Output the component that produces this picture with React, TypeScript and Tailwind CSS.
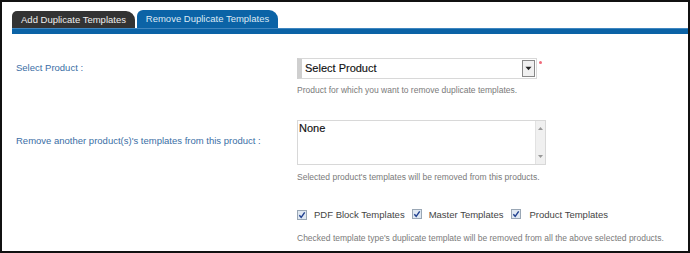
import React from "react";

function Check() {
  return (
    <span className="inline-flex w-[10px] h-[10px] border border-[#9aa7b5] bg-[#dfe8f2] items-center justify-center">
      <svg width="8" height="8" viewBox="0 0 8 8">
        <path d="M1.3 4.2 L3.2 6.3 L6.7 1.3" stroke="#1f3f8f" strokeWidth="1.4" fill="none" />
      </svg>
    </span>
  );
}

export default function App() {
  return (
    <div className="w-[690px] h-[253px] border-2 border-[#111] bg-white overflow-hidden font-['Liberation_Sans',Arial,sans-serif]">
      <div className="pl-[10px] pt-[8px]">
        <div className="flex items-end gap-[2px]">
          <div className="h-[17px] w-[123px] bg-[#333333] rounded-tl-[5px] rounded-tr-[9px] text-[9.5px] text-[#eeeeee] flex items-center justify-center pt-[1px]">
            Add Duplicate Templates
          </div>
          <div className="h-[18px] w-[141px] bg-[#0b63a6] rounded-tl-[6px] rounded-tr-[9px] text-[9.5px] text-[#dce9f5] flex items-center justify-center pt-[1px]">
            Remove Duplicate Templates
          </div>
        </div>
        <div className="h-[6px] bg-[#0b63a6] border-t border-[#3f86c0]"></div>
      </div>

      <div className="pl-[14px] pt-[24px]">
        <div className="flex">
          <div className="w-[281px] h-[21px] flex items-center text-[9.5px] text-[#3a6ea5]">Select Product :</div>
          <div>
            <div className="flex items-start">
              <div className="w-[240px] h-[21px] border border-[#d8d8d8] border-l-[5px] border-l-[#cfcfcf] flex items-center justify-between pl-[3px] pr-[1px]">
                <span className="text-[11px] text-[#111] [-webkit-text-stroke:0.15px_#111]">Select Product</span>
                <span className="w-[13px] h-[17px] border border-[#888] bg-[#f0f0f0] flex items-center justify-center">
                  <svg width="7" height="5" viewBox="0 0 7 5"><path d="M0.5 0.8 L6.5 0.8 L3.5 4.3 Z" fill="#222" /></svg>
                </span>
              </div>
              <span className="ml-[2px] mt-[3px] w-[3px] h-[3px] rounded-full bg-[#f06a7a]"></span>
            </div>
            <div className="mt-[6px] text-[8.5px] leading-[10px] text-[#7a7a7a]">Product for which you want to remove duplicate templates.</div>
          </div>
        </div>

        <div className="flex mt-[25px]">
          <div className="w-[281px] pt-[14px] text-[9.5px] text-[#3a6ea5]">Remove another product(s)'s templates from this product :</div>
          <div>
            <div className="w-[249px] h-[45px] border border-[#d8d8d8] flex">
              <div className="flex-1 pl-[1px] pt-[1px] text-[11px] leading-[13px] text-[#111] [-webkit-text-stroke:0.15px_#111]">None</div>
              <div className="w-[10px] bg-[#f0f0f0] border-l border-[#e2e2e2] flex flex-col items-center justify-between py-[6px]">
                <svg width="5" height="3" viewBox="0 0 5 3"><path d="M0 3 L2.5 0 L5 3 Z" fill="#999" /></svg>
                <svg width="5" height="3" viewBox="0 0 5 3"><path d="M0 0 L5 0 L2.5 3 Z" fill="#999" /></svg>
              </div>
            </div>
            <div className="mt-[7px] text-[8.5px] leading-[10px] text-[#7a7a7a]">Selected product's templates will be removed from this products.</div>
          </div>
        </div>

        <div className="flex mt-[27px]">
          <div className="w-[281px]"></div>
          <div>
            <div className="flex items-center h-[12px] text-[9.5px] text-[#444]">
              <Check />
              <span className="ml-[7px]">PDF Block Templates</span>
              <span className="ml-[7px]"><Check /></span>
              <span className="ml-[7px]">Master Templates</span>
              <span className="ml-[8px]"><Check /></span>
              <span className="ml-[8px]">Product Templates</span>
            </div>
            <div className="mt-[12px] text-[8.5px] leading-[10px] text-[#7a7a7a]">Checked template type's duplicate template will be removed from all the above selected products.</div>
          </div>
        </div>
      </div>
    </div>
  );
}
